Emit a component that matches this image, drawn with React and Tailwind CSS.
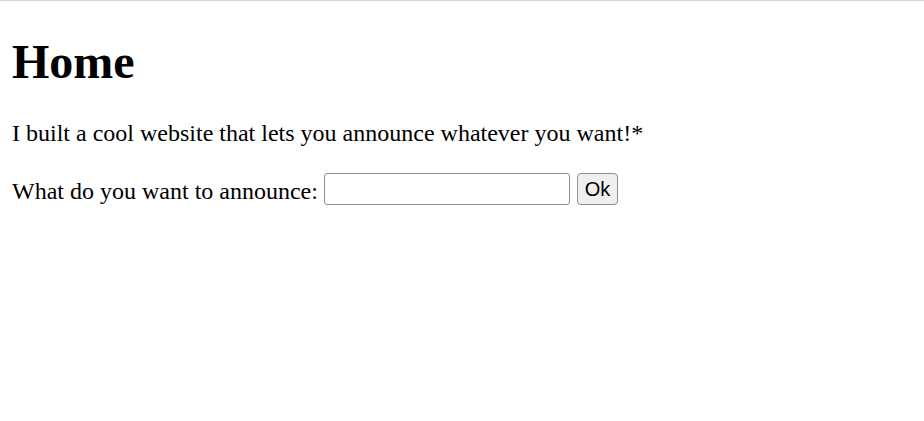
export default function App() {
  return (
    <div className="min-h-[421px] w-full bg-white border-t border-[#d4d4d4]" style={{ fontFamily: '"Liberation Serif", "Times New Roman", serif' }}>
      <div className="mx-[12px] text-black">
        <h1 className="text-[48px] font-bold leading-[53px] pt-[34px] m-0">Home</h1>
        <p className="text-[24px] leading-[27px] mt-[32px] mb-[26px]">I built a cool website that lets you announce whatever you want!*</p>
        <div className="text-[24px] leading-[27px] flex items-center">
          <span className="relative top-[2px]">What do you want to announce:</span>
          <input type="text" className="ml-[6px] w-[246px] h-[32px] border border-[#8f8f8f] rounded-[3px] px-[2px] bg-white outline-none" />
          <button className="ml-[7px] w-[41px] h-[32px] border border-[#8f8f8f] rounded-[4px] bg-[#efefef] text-[20px] leading-none" style={{ fontFamily: '"Liberation Sans", Arial, sans-serif' }}>Ok</button>
        </div>
      </div>
    </div>
  );
}
